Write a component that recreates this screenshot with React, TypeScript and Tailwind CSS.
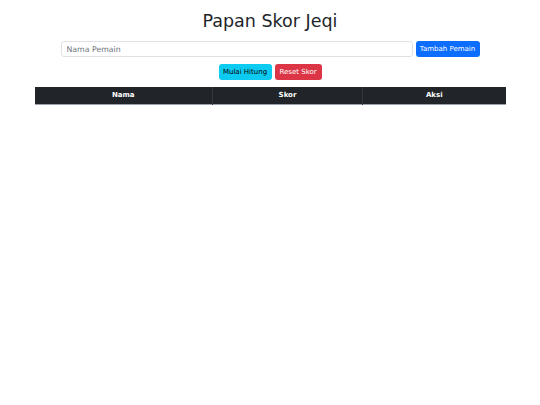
import React from "react";

const font = "font-['DejaVu_Sans',sans-serif]";

export default function App() {
  return (
    <div className={`min-h-[405px] bg-white text-[#212529] ${font}`}>
      <div className="mx-auto w-[471px] pt-[10px]">
        <h1 className="text-center text-[17.5px] leading-[22px] font-normal">Papan Skor Jeqi</h1>

        {/* form tambah pemain */}
        <div className="mx-auto mt-[9px] flex w-[419px] items-center gap-[3px]">
          <input
            type="text"
            placeholder="Nama Pemain"
            className={`h-[16px] flex-1 rounded-[3px] border border-[#dee2e6] bg-white px-[5px] text-[7.8px] text-[#212529] placeholder:text-[#6c757d] outline-none ${font}`}
          />
          <button className={`h-[16px] w-[64px] rounded-[3px] bg-[#0d6efd] text-[7px] text-white ${font}`}>
            Tambah Pemain
          </button>
        </div>

        <div className="mt-[7px] flex justify-center gap-[3px]">
          <button className={`h-[16px] w-[53px] rounded-[3px] bg-[#0dcaf0] text-[7px] text-black ${font}`}>
            Mulai Hitung
          </button>
          <button className={`h-[16px] w-[47px] rounded-[3px] bg-[#dc3545] text-[7px] text-white ${font}`}>
            Reset Skor
          </button>
        </div>

        <table className="mt-[7px] w-full border-collapse text-[7px]">
          <thead>
            <tr className="h-[17px] bg-[#212529] text-white border-b border-[#9ca3af]">
              <th className="w-[178px] font-bold">Nama</th>
              <th className="w-[150px] border-l border-[#32383e] font-bold">Skor</th>
              <th className="border-l border-[#32383e] font-bold">Aksi</th>
            </tr>
          </thead>
          <tbody></tbody>
        </table>
      </div>
    </div>
  );
}
